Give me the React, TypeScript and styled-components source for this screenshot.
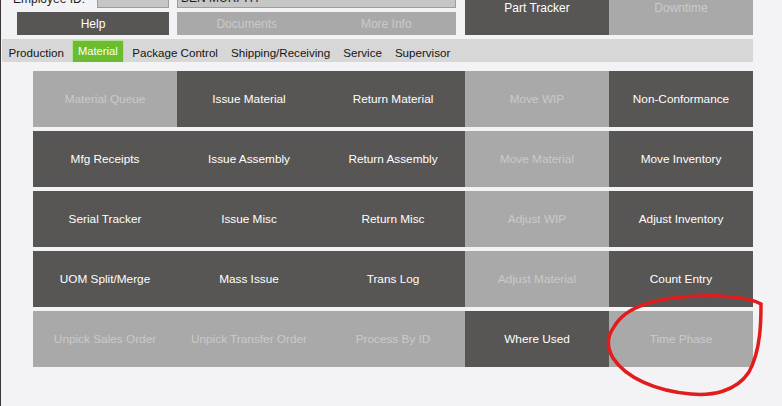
import React from 'react';
import styled, { createGlobalStyle } from 'styled-components';

const GlobalStyle = createGlobalStyle`
  html, body { margin: 0; padding: 0; background: #f3f3f5; }
  body { font-family: "Liberation Sans", Arial, sans-serif; font-size: 12px; }
  * { box-sizing: border-box; }
`;

const DARK = '#585654';
const LIGHT = '#a9a9a9';

const Window = styled.div`
  position: relative;
  width: 782px;
  height: 406px;
  overflow: hidden;
  border-left: 1px solid #3a3838;
  background: #f3f3f5;
`;

const Header = styled.div`
  display: flex;
  align-items: flex-end;
  height: 56px;
  margin-top: -21px;
  padding-left: 12px;
`;

const LeftCol = styled.div`
  width: 156px;
  display: flex;
  flex-direction: column;
  gap: 4px;
`;

const LabelRow = styled.div`
  display: flex;
  align-items: center;
  justify-content: space-between;
  height: 19px;
`;

const Label = styled.span`
  color: #1e1e1e;
  font-size: 12px;
`;

const Input = styled.div<{ $w: number }>`
  width: ${(p) => p.$w}px;
  height: 19px;
  background: #c6c6c6;
  border: 1px solid #9c9c9c;
  color: #1e1e1e;
  font-size: 12px;
  line-height: 17px;
  padding-left: 3px;
  white-space: nowrap;
  overflow: hidden;
`;

const MidCol = styled.div`
  width: 279px;
  margin-left: 8px;
  display: flex;
  flex-direction: column;
  gap: 4px;
`;

const RightCol = styled.div`
  width: 288px;
  margin-left: 9px;
  display: flex;
  height: 56px;
`;

const Pair = styled.div`
  display: flex;
  height: 23px;
`;

const Btn = styled.div<{ $on: boolean; $w?: number; $h: number; $ml?: number }>`
  width: ${(p) => (p.$w ? `${p.$w}px` : 'auto')};
  flex: ${(p) => (p.$w ? '0 0 auto' : '1 1 0')};
  height: ${(p) => p.$h}px;
  margin-left: ${(p) => p.$ml ?? 0}px;
  background: ${(p) => (p.$on ? DARK : LIGHT)};
  color: ${(p) => (p.$on ? '#ffffff' : '#cacaca')};
  display: flex;
  align-items: center;
  justify-content: center;
  padding-top: ${(p) => (p.$h > 40 ? 1 : 0)}px;
  font-size: 12px;
  white-space: nowrap;
`;

const TabBar = styled.div`
  margin-top: 4px;
  margin-left: 1px;
  width: 751px;
  height: 23px;
  background: #d7d7d7;
  display: flex;
`;

const Tab = styled.div<{ $active?: boolean }>`
  height: ${(p) => (p.$active ? 22 : 23)}px;
  margin: ${(p) => (p.$active ? '1px 2px 0 1.5px' : '0')};
  padding: ${(p) => (p.$active ? '0 5px' : '5px 6.5px 0 6.5px')};
  line-height: ${(p) => (p.$active ? 20 : 18)}px;
  color: ${(p) => (p.$active ? '#ffffff' : '#151515')};
  background: ${(p) => (p.$active ? '#6bbd2d' : 'transparent')};
  border: ${(p) => (p.$active ? '1px solid #b6e293' : 'none')};
  border-bottom: none;
  border-radius: ${(p) => (p.$active ? '2px 2px 0 0' : '0')};
  font-size: ${(p) => (p.$active ? 11.2 : 11.6)}px;
  white-space: nowrap;
`;

const Grid = styled.div`
  margin: 9px 0 0 32px;
  width: 720px;
  display: flex;
  flex-direction: column;
  gap: 4px;
`;

const Row = styled.div`
  display: grid;
  grid-template-columns: repeat(5, 144px);
  height: 56px;
`;

const Cell = styled.div<{ $on: boolean }>`
  background: ${(p) => (p.$on ? DARK : LIGHT)};
  color: ${(p) => (p.$on ? '#ffffff' : '#cacaca')};
  display: flex;
  align-items: center;
  justify-content: center;
  font-size: 11.8px;
  white-space: nowrap;
`;

const Annotation = styled.svg`
  position: absolute;
  left: 0;
  top: 0;
  pointer-events: none;
`;

type Item = [string, boolean];

const rows: Item[][] = [
  [['Material Queue', false], ['Issue Material', true], ['Return Material', true], ['Move WIP', false], ['Non-Conformance', true]],
  [['Mfg Receipts', true], ['Issue Assembly', true], ['Return Assembly', true], ['Move Material', false], ['Move Inventory', true]],
  [['Serial Tracker', true], ['Issue Misc', true], ['Return Misc', true], ['Adjust WIP', false], ['Adjust Inventory', true]],
  [['UOM Split/Merge', true], ['Mass Issue', true], ['Trans Log', true], ['Adjust Material', false], ['Count Entry', true]],
  [['Unpick Sales Order', false], ['Unpick Transfer Order', false], ['Process By ID', false], ['Where Used', true], ['Time Phase', false]],
];

const tabs = ['Production', 'Material', 'Package Control', 'Shipping/Receiving', 'Service', 'Supervisor'];

export default function App() {
  return (
    <>
      <GlobalStyle />
      <Window>
        <Header>
          <LeftCol>
            <LabelRow>
              <Label>Employee ID:</Label>
              <Input $w={72} />
            </LabelRow>
            <Btn $on $w={152} $h={23} $ml={4}>Help</Btn>
          </LeftCol>
          <MidCol>
            <Input $w={279}>BEN MURPHY</Input>
            <Pair>
              <Btn $on={false} $h={23}>Documents</Btn>
              <Btn $on={false} $h={23}>More Info</Btn>
            </Pair>
          </MidCol>
          <RightCol>
            <Btn $on $h={56}>Part Tracker</Btn>
            <Btn $on={false} $h={56}>Downtime</Btn>
          </RightCol>
        </Header>
        <TabBar>
          {tabs.map((t) => (
            <Tab key={t} $active={t === 'Material'}>{t}</Tab>
          ))}
        </TabBar>
        <Grid>
          {rows.map((r, i) => (
            <Row key={i}>
              {r.map(([label, on]) => (
                <Cell key={label} $on={on}>{label}</Cell>
              ))}
            </Row>
          ))}
        </Grid>
        <Annotation width={782} height={406} viewBox="0 0 782 406">
          <path
            d="M 613 327 C 625 305, 660 297, 700 296 C 725 295, 750 298, 760 304 C 760 320, 760 350, 748 372 C 735 392, 710 396, 690 394 C 655 391, 625 378, 612 358 C 605 346, 607 335, 613 327"
            fill="none"
            stroke="#e21c1c"
            strokeWidth={3.5}
            strokeLinecap="round"
          />
        </Annotation>
      </Window>
    </>
  );
}
